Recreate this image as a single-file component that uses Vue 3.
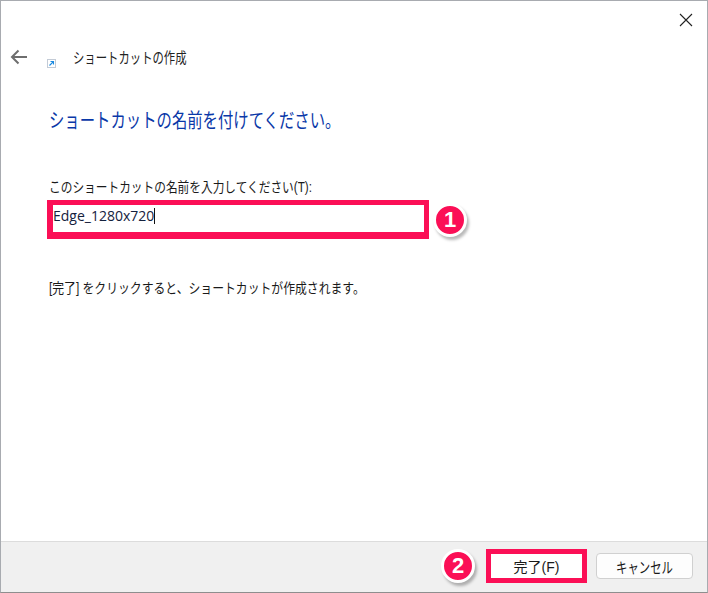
<script setup>
const title = "ショートカットの作成"
const heading = "ショートカットの名前を付けてください。"
const label = "このショートカットの名前を入力してください(T):"
const value = "Edge_1280x720"
const hint = "[完了] をクリックすると、ショートカットが作成されます。"
</script>

<template>
  <div class="window">
    <div class="close-row">
      <svg class="close" width="14" height="14" viewBox="0 0 14 14">
        <path d="M1 1L13 13M13 1L1 13" stroke="#222" stroke-width="1.1" fill="none" />
      </svg>
    </div>

    <div class="title-row">
      <svg class="back" width="18" height="16" viewBox="0 0 18 16">
        <path d="M17 8H2.5M8.5 1.5L2 8l6.5 6.5" stroke="#6e6e6e" stroke-width="2" fill="none" />
      </svg>
      <svg class="shortcut" width="9" height="9" viewBox="0 0 9 9">
        <rect x="0.5" y="0.5" width="8" height="8" fill="#fff" stroke="#c3cbd6" />
        <path d="M2.5 6.5L6 3M3.5 2.5H6.5V5.5" stroke="#1a8ae0" stroke-width="1.1" fill="none" />
      </svg>
      <span class="title">{{ title }}</span>
    </div>

    <main class="content">
      <h1 class="heading">{{ heading }}</h1>
      <label class="field-label">{{ label }}</label>
      <div class="input-row">
        <div class="input-box">{{ value }}<span class="caret"></span></div>
        <span class="badge badge-one">1</span>
      </div>
      <p class="hint">{{ hint }}</p>
    </main>

    <footer class="footer">
      <span class="badge badge-two">2</span>
      <button class="btn btn-primary">完了(F)</button>
      <button class="btn btn-cancel"><span class="cancel-text">キャンセル</span></button>
    </footer>
  </div>
</template>

<style>
html,
body {
  margin: 0;
  background: #fff;
}
</style>

<style scoped>
.window {
  width: 708px;
  height: 593px;
  box-sizing: border-box;
  border: 1px solid #a8abb0;
  border-bottom-color: #8e8e8e;
  display: flex;
  flex-direction: column;
  background: #fff;
  font-family: "Liberation Sans", "Noto Sans CJK JP", sans-serif;
  color: #1a1a1a;
}

.close-row {
  display: flex;
  justify-content: flex-end;
  padding: 12px 14px 0 0;
  height: 14px;
}

.title-row {
  display: flex;
  align-items: center;
  height: 24px;
  margin-top: 19px;
  padding-left: 9px;
}

.back {
  flex: none;
  margin-top: -2px;
}

.shortcut {
  margin: 10px 0 0 19px;
  flex: none;
}

.title {
  margin: -3px 0 0 17px;
  font-size: 15px;
  color: #222;
  transform: scaleX(0.757);
  transform-origin: left center;
}

.content {
  flex: 1;
  padding: 0 0 0 48px;
}

.heading {
  margin: 38px 0 0;
  font-size: 20px;
  line-height: 26px;
  font-weight: 400;
  color: #0a38a8;
  white-space: nowrap;
  transform: scaleX(0.768);
  transform-origin: left center;
}

.field-label {
  display: block;
  margin-top: 44px;
  font-size: 14px;
  line-height: 18px;
  white-space: nowrap;
  transform: scaleX(0.835);
  transform-origin: left center;
}

.input-row {
  display: flex;
  align-items: center;
  margin: 4px 0 0 -2px;
}

.input-box {
  width: 371px;
  height: 27px;
  border-style: solid;
  border-color: #fb0f56;
  border-width: 5px 5px 7px 6px;
  font-family: "Open Sans", "Liberation Sans", sans-serif;
  font-size: 14px;
  line-height: 21px;
  color: #14213d;
  display: flex;
  align-items: flex-start;
}

.caret {
  width: 1px;
  height: 16px;
  background: #111;
  margin-top: 3px;
}

.badge {
  width: 28px;
  height: 28px;
  border-radius: 50%;
  background: #fb0f56;
  color: #fff;
  font-weight: 700;
  font-size: 22px;
  font-family: "Liberation Sans", sans-serif;
  display: flex;
  align-items: center;
  justify-content: center;
  box-shadow: 2px 3px 3px rgba(0, 0, 0, 0.28);
  border: 3px solid #fff;
  box-sizing: content-box;
  flex: none;
}

.badge-one {
  margin-left: 4px;
}

.hint {
  margin: 40px 0 0;
  font-size: 14px;
  line-height: 18px;
  white-space: nowrap;
  transform: scaleX(0.845);
  transform-origin: left center;
}

.footer {
  height: 51px;
  box-sizing: border-box;
  background: #f0f0f0;
  border-top: 1px solid #dcdcdc;
  display: flex;
  align-items: center;
  justify-content: flex-end;
  padding: 0 14px 2px 0;
}

.badge-two {
  margin-right: 11px;
}

.btn {
  font-family: "Liberation Sans", "Noto Sans CJK JP", sans-serif;
  font-size: 14px;
  color: #1a1a1a;
  background: #fdfdfd;
  padding: 0;
  box-sizing: border-box;
}

.btn-primary {
  width: 101px;
  height: 34px;
  border: 5px solid #fb0f56;
  margin-right: 9px;
  background: #fff;
}

.btn-cancel {
  width: 97px;
  height: 26px;
  border: 1px solid #d0d0d0;
  border-radius: 4px;
}

.cancel-text {
  display: inline-block;
  font-size: 15px;
  transform: scaleX(0.76);
}
</style>
